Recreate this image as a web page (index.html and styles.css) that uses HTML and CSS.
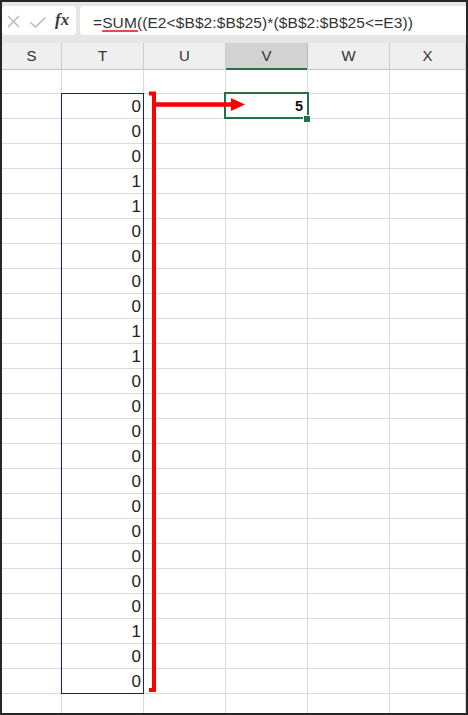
FILE: index.html
```html
<!DOCTYPE html>
<html lang="ja">
<head>
<meta charset="utf-8">
<title>Excel</title>
<link rel="stylesheet" href="styles.css">
</head>
<body>
<div class="app">
  <div class="fbar">
    <div class="tools">
      <svg class="tool-icons" width="48" height="29" viewBox="0 0 48 29">
        <path d="M6 10L17 21M17 10L6 21" stroke="#b5b5b5" stroke-width="1.3" fill="none"/>
        <path d="M28.5 16.5L33.5 21L43.5 11.5" stroke="#b5b5b5" stroke-width="1.3" fill="none"/>
      </svg>
      <span class="fx">fx</span>
    </div>
    <div class="formula">=<span class="fn">SUM(</span>(E2&lt;$B$2:$B$25)*($B$2:$B$25&lt;=E3))</div>
  </div>
  <div class="sheet">
    <div class="row head"><div>S</div><div>T</div><div>U</div><div class="sel">V</div><div>W</div><div>X</div></div>
    <div class="row"><div></div><div></div><div></div><div></div><div></div><div></div></div>
    <div class="row"><div></div><div class="num">0</div><div></div><div class="val">5</div><div></div><div></div></div>
    <div class="row"><div></div><div class="num">0</div><div></div><div></div><div></div><div></div></div>
    <div class="row"><div></div><div class="num">0</div><div></div><div></div><div></div><div></div></div>
    <div class="row"><div></div><div class="num">1</div><div></div><div></div><div></div><div></div></div>
    <div class="row"><div></div><div class="num">1</div><div></div><div></div><div></div><div></div></div>
    <div class="row"><div></div><div class="num">0</div><div></div><div></div><div></div><div></div></div>
    <div class="row"><div></div><div class="num">0</div><div></div><div></div><div></div><div></div></div>
    <div class="row"><div></div><div class="num">0</div><div></div><div></div><div></div><div></div></div>
    <div class="row"><div></div><div class="num">0</div><div></div><div></div><div></div><div></div></div>
    <div class="row"><div></div><div class="num">1</div><div></div><div></div><div></div><div></div></div>
    <div class="row"><div></div><div class="num">1</div><div></div><div></div><div></div><div></div></div>
    <div class="row"><div></div><div class="num">0</div><div></div><div></div><div></div><div></div></div>
    <div class="row"><div></div><div class="num">0</div><div></div><div></div><div></div><div></div></div>
    <div class="row"><div></div><div class="num">0</div><div></div><div></div><div></div><div></div></div>
    <div class="row"><div></div><div class="num">0</div><div></div><div></div><div></div><div></div></div>
    <div class="row"><div></div><div class="num">0</div><div></div><div></div><div></div><div></div></div>
    <div class="row"><div></div><div class="num">0</div><div></div><div></div><div></div><div></div></div>
    <div class="row"><div></div><div class="num">0</div><div></div><div></div><div></div><div></div></div>
    <div class="row"><div></div><div class="num">0</div><div></div><div></div><div></div><div></div></div>
    <div class="row"><div></div><div class="num">0</div><div></div><div></div><div></div><div></div></div>
    <div class="row"><div></div><div class="num">0</div><div></div><div></div><div></div><div></div></div>
    <div class="row"><div></div><div class="num">1</div><div></div><div></div><div></div><div></div></div>
    <div class="row"><div></div><div class="num">0</div><div></div><div></div><div></div><div></div></div>
    <div class="row"><div></div><div class="num">0</div><div></div><div></div><div></div><div></div></div>
    <div class="row"><div></div><div></div><div></div><div></div><div></div><div></div></div>

    <div class="range"></div>
    <div class="active"></div>
    <div class="handle"></div>
    <svg class="arrows" width="464" height="668" viewBox="2 43 464 668">
      <path d="M149 93.5H154V690H149" fill="none" stroke="#ff0000" stroke-width="4" stroke-linejoin="miter"/>
      <path d="M154 104.5H233" fill="none" stroke="#ff0000" stroke-width="4.5"/>
      <polygon points="231,98 245,104.5 231,111" fill="#ff0000"/>
    </svg>
  </div>
</div>
</body>
</html>
```
FILE: styles.css
```css
html, body {
  margin: 0;
  height: 715px;
}
body {
  background: #262626;
  padding: 2px;
  box-sizing: border-box;
  overflow: hidden;
  font-family: "Liberation Sans", Arial, sans-serif;
}
.app {
  background: #fff;
  height: 711px;
  overflow: hidden;
}
.fbar {
  background: #e6e6e9;
  height: 41px;
  display: flex;
  gap: 4px;
  padding-top: 4px;
  box-sizing: border-box;
}
.tools {
  width: 74px;
  height: 29px;
  flex: none;
  background: #fff;
  border-radius: 4px;
  display: flex;
  align-items: flex-start;
}
.tool-icons {
  display: block;
  flex: none;
}
.fx {
  margin-left: 5px;
  font-family: "Liberation Serif", "Times New Roman", serif;
  font-style: italic;
  font-weight: bold;
  font-size: 17px;
  line-height: 27px;
  color: #3a3a3a;
}
.formula {
  flex: 1;
  height: 29px;
  background: #fff;
  border-radius: 4px 0 0 4px;
  padding: 5px 0 0 13px;
  box-sizing: border-box;
  font-size: 15.5px;
  line-height: 24px;
  letter-spacing: 0.1px;
  color: #333;
  white-space: nowrap;
}
.fn {
  text-decoration: underline;
  text-decoration-color: #e5484d;
  text-decoration-thickness: 2px;
  text-underline-offset: 2px;
}
.sheet {
  position: relative;
}
.row {
  display: grid;
  grid-template-columns: 60px 82px 82px 82px 82px 1fr;
  height: 25px;
}
.row > div {
  border-right: 1px solid #dadada;
  border-bottom: 1px solid #dadada;
  box-sizing: border-box;
}
.head {
  height: 26px;
  background: #efefef;
}
.head > div {
  border-right-color: #cdcdcd;
  border-bottom-color: #c4c4c4;
  text-align: center;
  font-size: 15px;
  line-height: 25px;
  color: #333;
}
.head > .sel {
  background: #d2d2d2;
  border-bottom: 2px solid #217346;
  border-right-color: #b8b8b8;
}
.num {
  text-align: right;
  padding: 2px 2px 0 0;
  font-size: 17px;
  line-height: 22px;
  color: #222;
}
.val {
  text-align: right;
  padding-right: 4px;
  font-size: 14.5px;
  font-weight: bold;
  line-height: 24px;
  color: #111;
}
.range {
  position: absolute;
  left: 59px;
  top: 50px;
  width: 83px;
  height: 601px;
  border: 1px solid #1212d2;
  box-sizing: border-box;
}
.active {
  position: absolute;
  left: 222px;
  top: 49px;
  width: 85px;
  height: 27px;
  border: 2px solid #217346;
  box-sizing: border-box;
}
.handle {
  position: absolute;
  left: 301px;
  top: 72px;
  width: 8px;
  height: 8px;
  background: #217346;
  border: 1px solid #fff;
  box-sizing: border-box;
}
.arrows {
  position: absolute;
  left: 0;
  top: 0;
  overflow: visible;
}
```
